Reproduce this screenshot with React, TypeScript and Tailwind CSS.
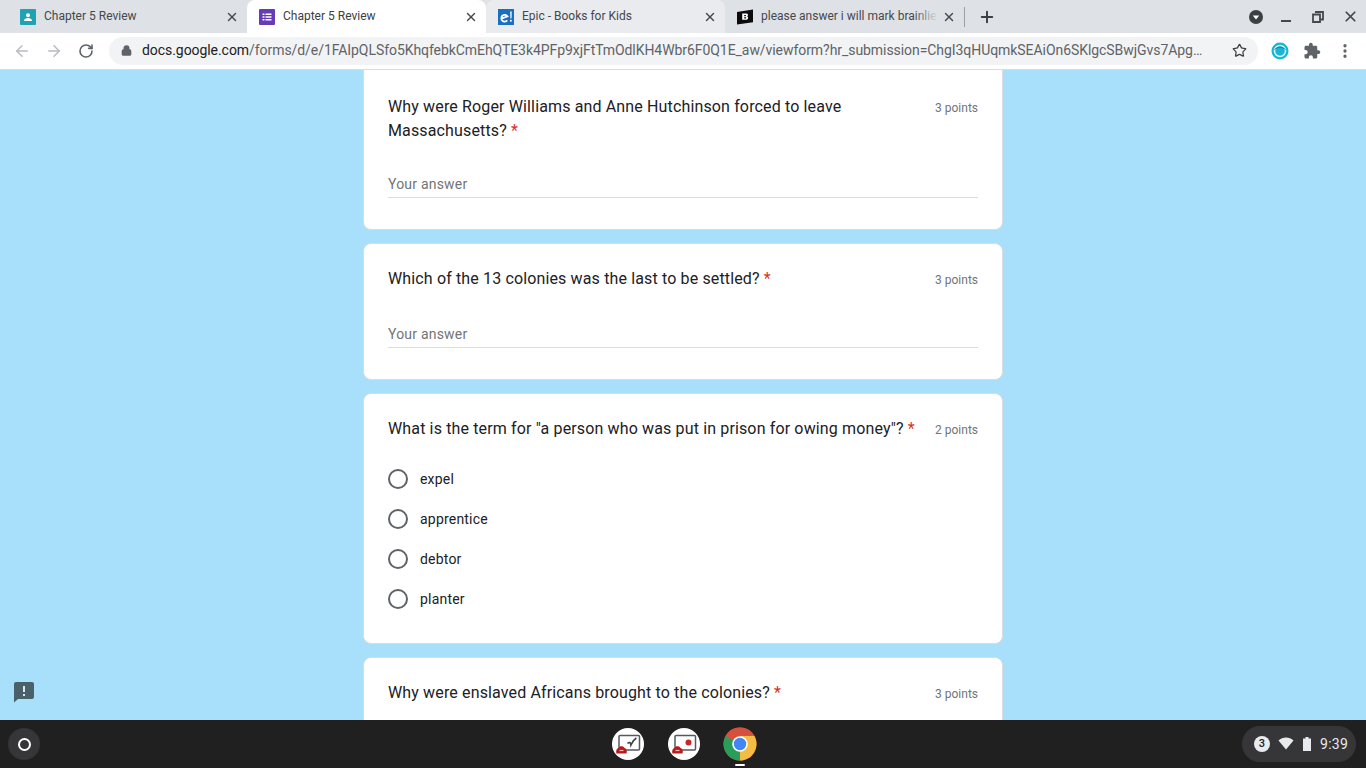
import { ArrowLeft, ArrowRight, RotateCw, Lock, Star, Plus, X, MoreVertical } from 'lucide-react';
import React from 'react';

const tabClose = (color = 'text-[#45484c]') => <X size={14} strokeWidth={2.4} className={color} />;

// Favicons
const ClassroomIcon = () => (
  <svg width="16" height="16" viewBox="0 0 16 16">
    <rect width="16" height="16" rx="1" fill="#1fa3b3" />
    <circle cx="8" cy="6.2" r="2" fill="#fff" />
    <path d="M3.8 12c0-2 2.4-3 4.2-3s4.2 1 4.2 3z" fill="#fff" />
  </svg>
);

const FormsIcon = () => (
  <svg width="16" height="16" viewBox="0 0 16 16">
    <rect width="16" height="16" rx="1" fill="#673ab7" />
    <path d="M3.5 4.5h2v1.5h-2zM6.5 4.5h6v1.5h-6zM3.5 7.3h2v1.5h-2zM6.5 7.3h6v1.5h-6zM3.5 10.1h2v1.5h-2zM6.5 10.1h6v1.5h-6z" fill="#fff" />
  </svg>
);

const EpicIcon = () => (
  <svg width="16" height="16" viewBox="0 0 16 16">
    <rect width="16" height="16" fill="#1a6fc0" />
    <path d="M12.2 2.5h1.5l-.2 7h-1.1z" fill="#fff" />
    <circle cx="12.9" cy="11.8" r="1" fill="#fff" />
    <path d="M9.3 11.4A3.4 3.4 0 1 1 9.6 7.4L3.4 9.6" fill="none" stroke="#fff" strokeWidth="1.7" />
  </svg>
);

const BrainlyIcon = () => (
  <svg width="16" height="16" viewBox="0 0 16 16">
    <path d="M0 3L16 0.6V13.2L0 15.6z" fill="#0b0b0b" />
    <path d="M5.2 4.6h4.2c1.7 0 2.2 2 .8 2.9 1.5.6 1.2 3.3-1.1 3.3H5.2zM7.2 6v1.2h1.3c.7 0 .7-1.2 0-1.2zM7.2 8.2v1.2h1.5c.8 0 .8-1.2 0-1.2z" fill="#fff" fillRule="evenodd" />
  </svg>
);

const tabs = [
  { title: 'Chapter 5 Review', icon: <ClassroomIcon />, bg: '', text: 'text-[#45484c]' },
  { title: 'Chapter 5 Review', icon: <FormsIcon />, bg: 'bg-white rounded-t-lg', text: 'text-[#3c4043]' },
  { title: 'Epic - Books for Kids', icon: <EpicIcon />, bg: 'bg-[#e9ebee] rounded-t-lg', text: 'text-[#45484c]' },
  { title: 'please answer i will mark brainliest', icon: <BrainlyIcon />, bg: '', text: 'text-[#45484c]', fade: true },
];

const ShelfBadge = ({ dot }: { dot: boolean }) => (
  <div className="flex h-8 w-8 items-center justify-center rounded-full bg-white">
    <svg width="26" height="24" viewBox="0 0 26 24">
      <rect x="4" y="3.5" width="20.5" height="14.5" rx="1" fill="none" stroke="#55595d" strokeWidth="1.5" />
      {dot ? (
        <circle cx="17.5" cy="10.5" r="3" fill="#c62828" />
      ) : (
        <path d="M12.5 11.5c2 -2 3 -1 3.4 1.5 1 -2.5 3 -5.5 5.5 -7" fill="none" stroke="#3c4043" strokeWidth="1.6" />
      )}
      <path d="M1.5 21.5c-1-3 .5-5.5 2.2-5.5 .4-2.4 5.2-2.4 5.6 0 1.7 0 3.2 2.5 2.2 5.5z" fill="#b71c1c" />
      <path d="M4.5 18.5h4" stroke="#f3b6b6" strokeWidth="1.2" />
    </svg>
  </div>
);

const ChromeIcon = () => (
  <svg width="34" height="34" viewBox="0 0 34 34">
    <circle cx="17" cy="17" r="16.5" fill="#d6503f" />
    <path d="M17 17L2.7 8.8A16.5 16.5 0 0 0 17 33.5z" fill="#2a9d58" />
    <path d="M17 17L17 33.5A16.5 16.5 0 0 0 31.3 8.8L17 8.8z" fill="#f2bd42" />
    <path d="M2.7 8.8A16.5 16.5 0 0 1 31.3 8.8L17 8.8 9.5 13z" fill="#d6503f" />
    <circle cx="17" cy="17" r="7.8" fill="#fff" />
    <circle cx="17" cy="17" r="6.2" fill="#4285f4" />
  </svg>
);

const Req = () => <span className="text-[#d93025]"> *</span>;

const Question = ({ title, points }: { title: string; points: string }) => (
  <div className="flex items-start justify-between">
    <div className="w-[536px] text-[16px] leading-6 tracking-[0.14px] text-[#202124]">
      {title}
      <Req />
    </div>
    <div className="pt-[1px] text-[12px] leading-6 text-[#70757a]">{points}</div>
  </div>
);

const AnswerInput = () => (
  <div className="border-b border-[#dadce0] pb-[3px] text-[14px] leading-5 tracking-[0.2px] text-[#70757a]">Your answer</div>
);

const Radio = ({ label }: { label: string }) => (
  <div className="flex h-10 items-center gap-3">
    <div className="h-5 w-5 rounded-full border-2 border-[#5f6368]" />
    <span className="text-[14px] leading-5 tracking-[0.2px] text-[#202124]">{label}</span>
  </div>
);

const cardClass = 'w-[640px] rounded-lg border border-[#dadce0] bg-white px-6';

export default function App() {
  return (
    <div className="flex h-screen w-full flex-col overflow-hidden bg-[#a8e0fc] font-['Roboto',sans-serif]">
      {/* Tab strip */}
      <div className="flex h-[33px] shrink-0 items-center bg-[#dee1e6] pl-2">
        {tabs.map((tab, i) => (
          <div key={i} className={`relative flex h-full w-[239px] items-center pl-3 pr-[7px] ${tab.bg}`}>
            {tab.icon}
            <span className={`-mt-[2px] ml-2 min-w-0 flex-1 overflow-hidden whitespace-nowrap text-[12px] ${tab.text}`}>{tab.title}</span>
            {tab.fade && <div className="absolute right-[26px] top-1 h-6 w-6 bg-gradient-to-r from-transparent to-[#dee1e6]" />}
            {tab.fade && <div className="absolute right-[23px] top-1 h-6 w-[4px] bg-[#dee1e6]" />}
            <div className="flex w-4 shrink-0 items-center justify-center">{tabClose()}</div>
          </div>
        ))}
        <div className="h-5 w-px bg-[#9aa0a6]" />
        <Plus size={18} strokeWidth={2.6} className="ml-[13px] text-[#3c4043]" />
        <div className="ml-auto flex items-center">
          <svg width="16" height="16" viewBox="0 0 16 16" className="mr-[17px]">
            <circle cx="8" cy="8" r="7" fill="#3c4043" />
            <path d="M4.8 6.5h6.4L8 10.5z" fill="#fff" />
          </svg>
          <div className="mt-[9px] h-[2px] w-[10px] bg-[#45484c]" />
          <svg width="12" height="12" viewBox="0 0 12 12" className="ml-[21px]">
            <path d="M3 1h8v7.5H8.5M1 3.5h7v7.5H1z" fill="none" stroke="#45484c" strokeWidth="1.8" />
          </svg>
          <X size={17} strokeWidth={2.4} className="ml-[18px] mr-[7px] text-[#45484c]" />
        </div>
      </div>

      {/* Toolbar */}
      <div className="flex h-[37px] shrink-0 items-center border-b border-[#dadce0] bg-white pb-[1px] pl-[13px]">
        <ArrowLeft size={18} strokeWidth={2} className="text-[#b8bbbf]" />
        <ArrowRight size={18} strokeWidth={2} className="ml-[14px] text-[#b8bbbf]" />
        <RotateCw size={16} strokeWidth={2.4} className="ml-[15px] text-[#5f6368]" />
        <div className="ml-[15px] flex h-7 w-[1149px] items-center rounded-full bg-[#f1f3f4] pl-[12px] pr-[11px]">
          <Lock size={11} strokeWidth={3} className="shrink-0 text-[#5f6368]" fill="#5f6368" />
          <div className="ml-[10px] w-[1080px] shrink-0 overflow-hidden whitespace-nowrap text-[14px] tracking-[-0.06px] text-[#5f6368]">
            <span className="text-[#202124]">docs.google.com</span>
            /forms/d/e/1FAIpQLSfo5KhqfebkCmEhQTE3k4PFp9xjFtTmOdlKH4Wbr6F0Q1E_aw/viewform?hr_submission=ChgI3qHUqmkSEAiOn6SKlgcSBwjGvs7Apg…
          </div>
          <Star size={15} strokeWidth={2} className="ml-auto shrink-0 text-[#3c4043]" />
        </div>
        <svg width="18" height="18" viewBox="0 0 18 18" className="ml-[13px]">
          <circle cx="9" cy="9" r="8.5" fill="#19b5d6" />
          <circle cx="9" cy="9" r="5.5" fill="none" stroke="#d8f4fb" strokeWidth="1.5" />
          <path d="M3.5 7.5c3-3 8-3 11 0" fill="none" stroke="#0f7f99" strokeWidth="1" />
        </svg>
        <svg width="18" height="18" viewBox="0 0 24 24" className="ml-[14px]">
          <path d="M20.5 11H19V7c0-1.1-.9-2-2-2h-4V3.5C13 2.12 11.88 1 10.5 1S8 2.12 8 3.5V5H4c-1.1 0-1.99.9-1.99 2v3.8H3.5c1.49 0 2.7 1.21 2.7 2.7s-1.21 2.7-2.7 2.7H2V20c0 1.1.9 2 2 2h3.8v-1.5c0-1.49 1.21-2.7 2.7-2.7 1.49 0 2.7 1.21 2.7 2.7V22H17c1.1 0 2-.9 2-2v-4h1.5c1.38 0 2.5-1.12 2.5-2.5S21.88 11 20.5 11z" fill="#5f6368" />
        </svg>
        <MoreVertical size={18} strokeWidth={2.4} className="ml-[15px] text-[#5f6368]" />
      </div>

      {/* Form */}
      <div className="relative flex min-h-0 flex-1 flex-col items-center gap-[13px] overflow-hidden">
        <div className={`${cardClass} h-[160px] shrink-0 rounded-t-none border-t-0 pt-[25px]`}>
          <Question title="Why were Roger Williams and Anne Hutchinson forced to leave Massachusetts?" points="3 points" />
          <div className="mt-[31px]">
            <AnswerInput />
          </div>
        </div>
        <div className={`${cardClass} h-[137px] shrink-0 pt-[23px]`}>
          <Question title="Which of the 13 colonies was the last to be settled?" points="3 points" />
          <div className="mt-[32px]">
            <AnswerInput />
          </div>
        </div>
        <div className={`${cardClass} h-[251px] shrink-0 pt-[23px]`}>
          <Question title={'What is the term for "a person who was put in prison for owing money"?'} points="2 points" />
          <div className="mt-[17px] flex flex-col">
            <Radio label="expel" />
            <Radio label="apprentice" />
            <Radio label="debtor" />
            <Radio label="planter" />
          </div>
        </div>
        <div className={`${cardClass} h-[100px] shrink-0 pt-[23px]`}>
          <Question title="Why were enslaved Africans brought to the colonies?" points="3 points" />
        </div>

        {/* Feedback button */}
        <svg width="24" height="24" viewBox="0 0 24 24" className="absolute bottom-[16px] left-[12px]">
          <path d="M4 2h16a2 2 0 0 1 2 2v13a2 2 0 0 1-2 2H6l-4 3.5V4a2 2 0 0 1 2-2z" fill="#455a64" opacity="0.95" />
          <path d="M11 6h2v6h-2zM11 14h2v2h-2z" fill="#dfe6ea" />
        </svg>
      </div>

      {/* Shelf */}
      <div className="relative flex h-12 shrink-0 items-center justify-center gap-6 bg-[#202020] pl-[3px]">
        <div className="absolute left-2 flex h-8 w-8 items-center justify-center rounded-full bg-[#363638]">
          <div className="h-[13px] w-[13px] rounded-full border-2 border-white" />
        </div>
        <ShelfBadge dot={false} />
        <ShelfBadge dot={true} />
        <div className="relative -ml-px h-[34px] w-[34px]">
          <ChromeIcon />
          <div className="absolute left-[12px] top-[37px] h-[2px] w-[10px] rounded-full bg-white" />
        </div>
        <div className="absolute right-[10px] flex h-9 w-[114px] items-center rounded-full bg-[#363638] pl-[12px]">
          <div className="flex h-4 w-4 items-center justify-center rounded-full bg-[#e8eaed] text-[11px] font-medium text-[#202124]">3</div>
          <svg width="16" height="14" viewBox="0 0 16 14" className="ml-[8px]">
            <path d="M0.5 3.5C4.5 -0.5 11.5 -0.5 15.5 3.5L8 12.5z" fill="#e8eaed" />
          </svg>
          <svg width="8" height="14" viewBox="0 0 8 14" className="ml-[9px]">
            <path d="M2.5 0h3v1.5H8V14H0V1.5h2.5z" fill="#e8eaed" />
          </svg>
          <span className="ml-[9px] text-[14px] tracking-[0.3px] text-[#e8eaed]">9:39</span>
        </div>
      </div>
    </div>
  );
}
